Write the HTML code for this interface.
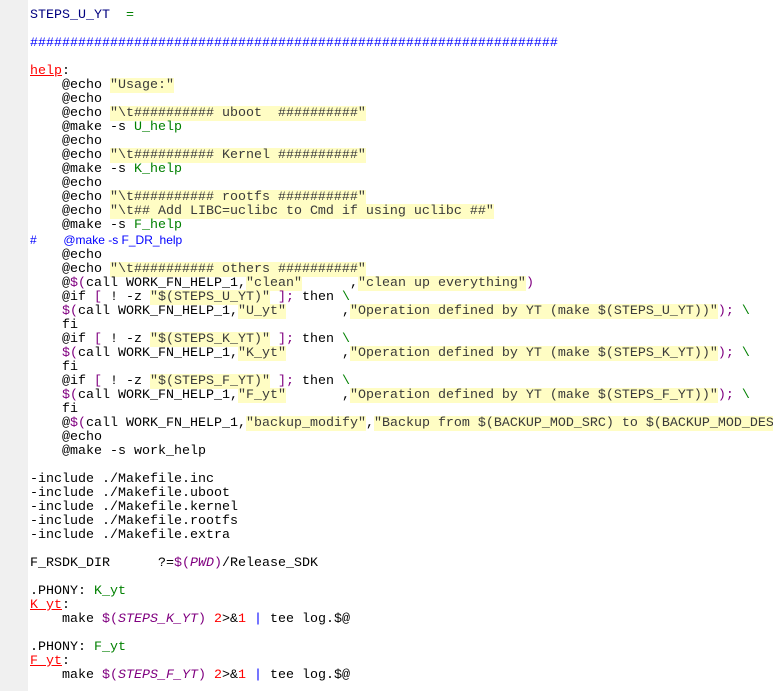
<!DOCTYPE html>
<html><head><meta charset="utf-8"><style>
html,body{margin:0;padding:0;background:#fff;width:773px;height:691px;overflow:hidden}
.m{position:absolute;left:0;top:0;width:28px;height:691px;background:#f0f0f0}
pre{position:absolute;left:30px;top:9px;margin:0;font-family:"Liberation Mono",monospace;font-size:13.33px;line-height:14px;color:#000;white-space:pre}
.s{background:#fffdc4;color:#3a3a3a}
.p{color:#800080}
.g{color:#008000}
.db{color:#000080}
.b{color:#0000ff}
.r{color:#ff0000;text-decoration:underline}
.i{color:#800080;font-style:italic}
.n{color:#ff0000}
.c{color:#0000ff;font-family:"Liberation Sans",sans-serif;font-size:12px}
</style></head><body><div class="m"></div>
<pre><span class="db">STEPS_U_YT</span>  <span class="g">=</span>

<span class="b">##################################################################</span>

<span class="r">help</span>:
    @echo <span class="s">"Usage:"</span>
    @echo
    @echo <span class="s">"\t########## uboot  ##########"</span>
    @make -s <span class="g">U_help</span>
    @echo
    @echo <span class="s">"\t########## Kernel ##########"</span>
    @make -s <span class="g">K_help</span>
    @echo
    @echo <span class="s">"\t########## rootfs ##########"</span>
    @echo <span class="s">"\t## Add LIBC=uclibc to Cmd if using uclibc ##"</span>
    @make -s <span class="g">F_help</span>
<span class="c">#        @make -s F_DR_help</span>
    @echo
    @echo <span class="s">"\t########## others ##########"</span>
    @<span class="p">$(</span>call WORK_FN_HELP_1,<span class="s">"clean"</span>      ,<span class="s">"clean up everything"</span><span class="p">)</span>
    @if <span class="p">[</span> ! -z <span class="s">"$(STEPS_U_YT)"</span> <span class="p">];</span> then <span class="g">\</span>
    <span class="p">$(</span>call WORK_FN_HELP_1,<span class="s">"U_yt"</span>       ,<span class="s">"Operation defined by YT (make $(STEPS_U_YT))"</span><span class="p">);</span> <span class="g">\</span>
    fi
    @if <span class="p">[</span> ! -z <span class="s">"$(STEPS_K_YT)"</span> <span class="p">];</span> then <span class="g">\</span>
    <span class="p">$(</span>call WORK_FN_HELP_1,<span class="s">"K_yt"</span>       ,<span class="s">"Operation defined by YT (make $(STEPS_K_YT))"</span><span class="p">);</span> <span class="g">\</span>
    fi
    @if <span class="p">[</span> ! -z <span class="s">"$(STEPS_F_YT)"</span> <span class="p">];</span> then <span class="g">\</span>
    <span class="p">$(</span>call WORK_FN_HELP_1,<span class="s">"F_yt"</span>       ,<span class="s">"Operation defined by YT (make $(STEPS_F_YT))"</span><span class="p">);</span> <span class="g">\</span>
    fi
    @<span class="p">$(</span>call WORK_FN_HELP_1,<span class="s">"backup_modify"</span>,<span class="s">"Backup from $(BACKUP_MOD_SRC) to $(BACKUP_MOD_DEST)"</span>
    @echo
    @make -s work_help

-include ./Makefile.inc
-include ./Makefile.uboot
-include ./Makefile.kernel
-include ./Makefile.rootfs
-include ./Makefile.extra

F_RSDK_DIR      ?=<span class="p">$(</span><span class="i">PWD</span><span class="p">)</span>/Release_SDK

.PHONY: <span class="g">K_yt</span>
<span class="r">K_yt</span>:
    make <span class="p">$(</span><span class="i">STEPS_K_YT</span><span class="p">)</span> <span class="n">2</span>&gt;&amp;<span class="n">1</span> <span class="b">|</span> tee log.$@

.PHONY: <span class="g">F_yt</span>
<span class="r">F_yt</span>:
    make <span class="p">$(</span><span class="i">STEPS_F_YT</span><span class="p">)</span> <span class="n">2</span>&gt;&amp;<span class="n">1</span> <span class="b">|</span> tee log.$@
</pre></body></html>
